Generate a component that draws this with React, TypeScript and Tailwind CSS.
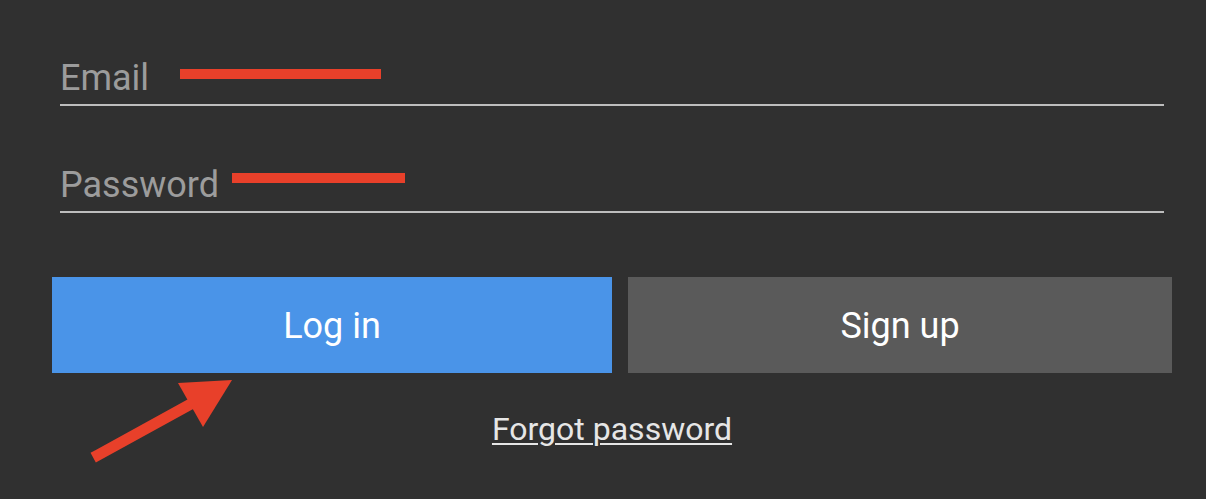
import React from "react";

const font = { fontFamily: "Roboto, 'Liberation Sans', sans-serif" };

function Field({ label, markGap, markWidth, markTop }: { label: string; markGap: string; markWidth: string; markTop: string }) {
    return (
        <div className="flex items-start border-b-2 border-[#bdbdbd] pb-[6px]">
            <span className="text-[36px] leading-[40px] text-[#9c9c9c]">{label}</span>
            {/* red annotation mark */}
            <span className={`${markGap} ${markWidth} ${markTop} h-[10px] bg-[#e8402a]`} />
        </div>
    );
}

export default function App() {
    return (
        <div className="relative h-[499px] w-full overflow-hidden bg-[#303030]" style={font}>
            <div className="pt-[58px] pl-[60px] pr-[42px]">
                <Field label="Email" markGap="ml-[31px]" markWidth="w-[201px]" markTop="mt-[11px]" />
                <div className="mt-[59px]">
                    <Field label="Password" markGap="ml-[13px]" markWidth="w-[173px]" markTop="mt-[8px]" />
                </div>
            </div>

            <div className="mt-[64px] flex gap-4 pl-[52px] pr-[34px]">
                <button className="flex h-[96px] w-[560px] items-center justify-center bg-[#4a94e8] pt-[2px] text-[36px] text-white">
                    Log in
                </button>
                <button className="flex h-[96px] flex-1 items-center justify-center bg-[#5a5a5a] pt-[2px] text-[36px] text-white">
                    Sign up
                </button>
            </div>

            <div className="mt-[38px] flex justify-center pl-[18px]">
                <a className="text-[32px] leading-[36px] text-[#e6e6e6] underline decoration-2 underline-offset-[3px]">
                    Forgot password
                </a>
            </div>

            {/* red arrow annotation */}
            <svg className="absolute left-0 top-0" width="1206" height="499" viewBox="0 0 1206 499">
                <line x1="98" y1="455" x2="198" y2="400" stroke="#e8402a" strokeWidth="11" strokeLinecap="square" />
                <polygon points="232,380 178,383 203,427" fill="#e8402a" />
            </svg>
        </div>
    );
}
